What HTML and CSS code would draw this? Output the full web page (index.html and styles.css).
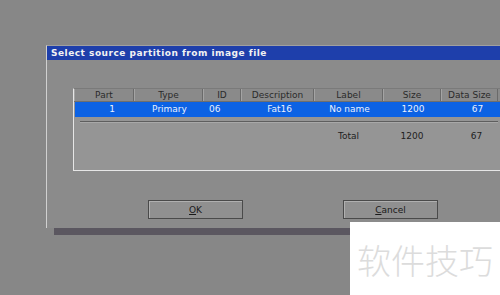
FILE: index.html
```html
<!DOCTYPE html>
<html lang="en">
<head>
  <meta charset="UTF-8">
  <meta name="viewport" content="width=device-width, initial-scale=1.0">
  <title>Select source partition</title>
  <link rel="stylesheet" href="styles.css">
</head>
<body>
  <div class="dialog">
    <div class="title-bar">Select source partition from image file</div>

    <div class="panel">
      <div class="row header">
        <div class="cell c-part">Part</div>
        <div class="cell c-type">Type</div>
        <div class="cell c-id">ID</div>
        <div class="cell c-desc">Description</div>
        <div class="cell c-label">Label</div>
        <div class="cell c-size">Size</div>
        <div class="cell c-data">Data Size</div>
      </div>
      <div class="row selected">
        <div class="cell c-part right">1</div>
        <div class="cell c-type">Primary</div>
        <div class="cell c-id left">06</div>
        <div class="cell c-desc right">Fat16</div>
        <div class="cell c-label">No name</div>
        <div class="cell c-size">1200</div>
        <div class="cell c-data shift">67</div>
      </div>
      <div class="divider"></div>
      <div class="row total">
        <div class="cell c-part"></div>
        <div class="cell c-type"></div>
        <div class="cell c-id"></div>
        <div class="cell c-desc"></div>
        <div class="cell c-label">Total</div>
        <div class="cell c-size">1200</div>
        <div class="cell c-data shift">67</div>
      </div>
    </div>

    <div class="buttons">
      <button class="btn"><u>O</u>K</button>
      <button class="btn"><u>C</u>ancel</button>
    </div>
  </div>

  <div class="watermark">软件技巧</div>
</body>
</html>
```

FILE: styles.css
```css
body {
  margin: 0;
  width: 500px;
  height: 295px;
  overflow: hidden;
  background-color: #878787;
  font-family: "DejaVu Sans", Arial, sans-serif;
  position: relative;
}

.dialog {
  margin: 45px 0 0 46px;
  width: 470px;
  height: 182px;
  background: #8b8b8b;
  border-left: 1px solid #d0d0d0;
  border-top: 1px solid #a0a0a0;
  box-shadow: 8px 7px 0 #5b5760;
}

.title-bar {
  height: 14px;
  line-height: 14px;
  background: #1e3fab;
  color: #f2f2f2;
  font-size: 9px;
  font-weight: bold;
  letter-spacing: 0.5px;
  padding-left: 4px;
}

.panel {
  margin: 28px 0 0 26px;
  width: 444px;
  height: 81px;
  background: #959595;
  border-left: 1px solid #e6e6e6;
  border-bottom: 1px solid #e6e6e6;
  border-top: 1px solid #7a7a7a;
}

.row {
  display: flex;
  font-size: 9px;
}

.header {
  height: 12px;
  line-height: 12px;
  background: #8a8a8a;
  color: #2a2a2a;
  border-bottom: 1px solid #6e6e6e;
}

.header .cell {
  border-right: 1px solid #6a6a6a;
  border-left: 1px solid #a4a4a4;
}

.cell {
  text-align: center;
  box-sizing: border-box;
}

.c-part { width: 60px; }
.c-type { width: 69px; }
.c-id { width: 38px; }
.c-desc { width: 73px; }
.c-label { width: 69px; }
.c-size { width: 58px; }
.c-data { width: 57px; }

.selected {
  height: 15px;
  line-height: 15px;
  background: #0c62e4;
  color: #e8f0ff;
  margin-left: 1px;
}

.selected .right { text-align: right; padding-right: 20px; }
.selected .c-desc.right { padding-right: 23px; }
.selected .left { text-align: left; padding-left: 5px; }
.shift { padding-left: 14px; }

.divider {
  margin: 4px 0 0 6px;
  width: 418px;
  height: 1px;
  background: #5e5e5e;
  border-bottom: 1px solid #a8a8a8;
}

.total {
  margin-top: 6px;
  height: 14px;
  line-height: 14px;
  color: #1e1e1e;
}

.buttons {
  display: flex;
  gap: 100px;
  margin: 29px 0 0 101px;
}

.btn {
  width: 95px;
  height: 19px;
  padding: 0;
  background: #909090;
  border: 1px solid #4a4a4a;
  box-shadow: inset 1px 1px 0 #b0b0b0;
  font-family: "DejaVu Sans", Arial, sans-serif;
  font-size: 9px;
  color: #1a1a1a;
}

.watermark {
  position: absolute;
  left: 350px;
  top: 222px;
  width: 150px;
  height: 73px;
  padding-top: 3px;
  box-sizing: border-box;
  background: #ffffff;
  color: #dcdcdc;
  font-family: "Noto Sans CJK SC", sans-serif;
  font-size: 34px;
  font-weight: 300;
  line-height: 70px;
  text-align: center;
}
```
